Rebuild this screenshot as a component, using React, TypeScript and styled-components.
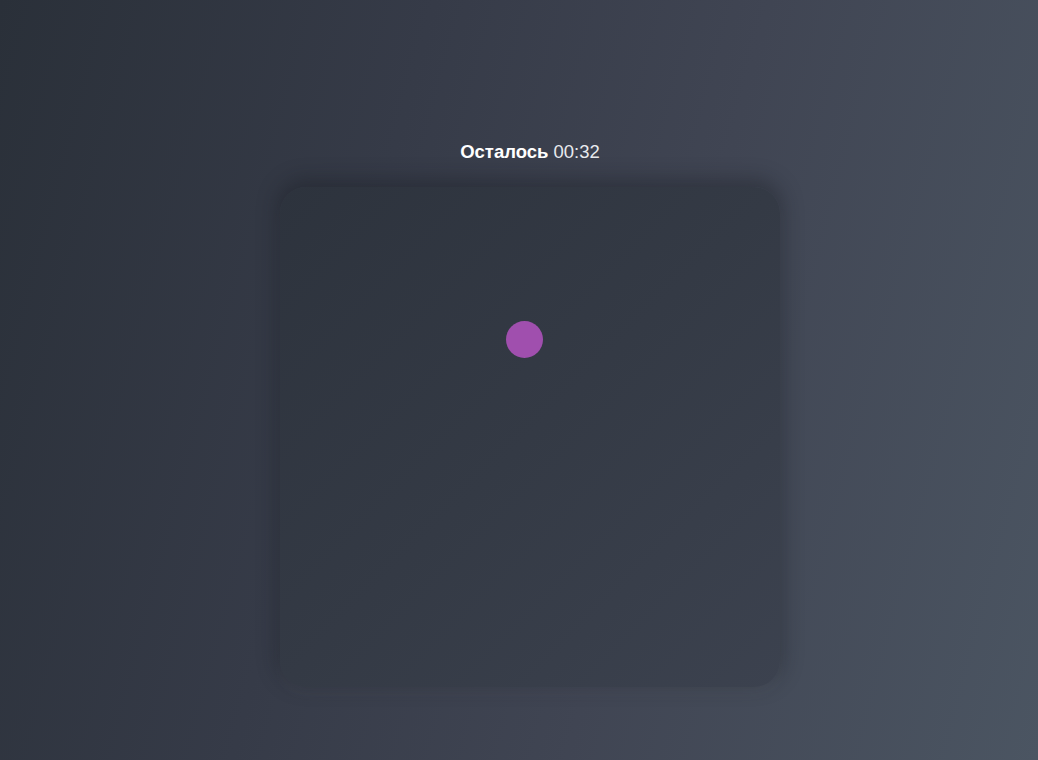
import React from "react";
import styled, { createGlobalStyle } from "styled-components";

const Global = createGlobalStyle`
  html, body { margin: 0; padding: 0; }
  body {
    width: 1038px;
    height: 760px;
    overflow: hidden;
    font-family: "Liberation Sans", Arial, sans-serif;
  }
`;

const Page = styled.div`
  width: 1038px;
  height: 760px;
  background: linear-gradient(105deg, #2a3039 0%, #363b48 35%, #404553 62%, #4b5562 100%);
  display: flex;
  flex-direction: column;
  align-items: center;
  padding-top: 140px;
  padding-left: 22px;
  box-sizing: border-box;
`;

const Status = styled.div`
  color: #ffffff;
  font-size: 18.5px;
  line-height: 24px;
  height: 24px;
  margin-bottom: 23px;
`;

const Label = styled.span`
  font-weight: 700;
`;

const Time = styled.span`
  color: #e8eaee;
  font-weight: 400;
`;

const Board = styled.div`
  width: 500px;
  height: 500px;
  border-radius: 26px;
  background: linear-gradient(135deg, #2d333d 0%, #343a45 50%, #3c424f 100%);
  box-shadow: 0 -5px 20px 3px rgba(20, 24, 30, 0.35), 0 8px 14px rgba(255, 255, 255, 0.03);
  display: flex;
  justify-content: center;
  padding-top: 134px;
  box-sizing: border-box;
  padding-right: 12px;
`;

const Dot = styled.div`
  width: 37px;
  height: 37px;
  border-radius: 50%;
  background: #a04fae;
`;

export default function App() {
  return (
    <>
      <Global />
      <Page>
        <Status>
          <Label>Осталось</Label> <Time>00:32</Time>
        </Status>
        <Board>
          <Dot />
        </Board>
      </Page>
    </>
  );
}
